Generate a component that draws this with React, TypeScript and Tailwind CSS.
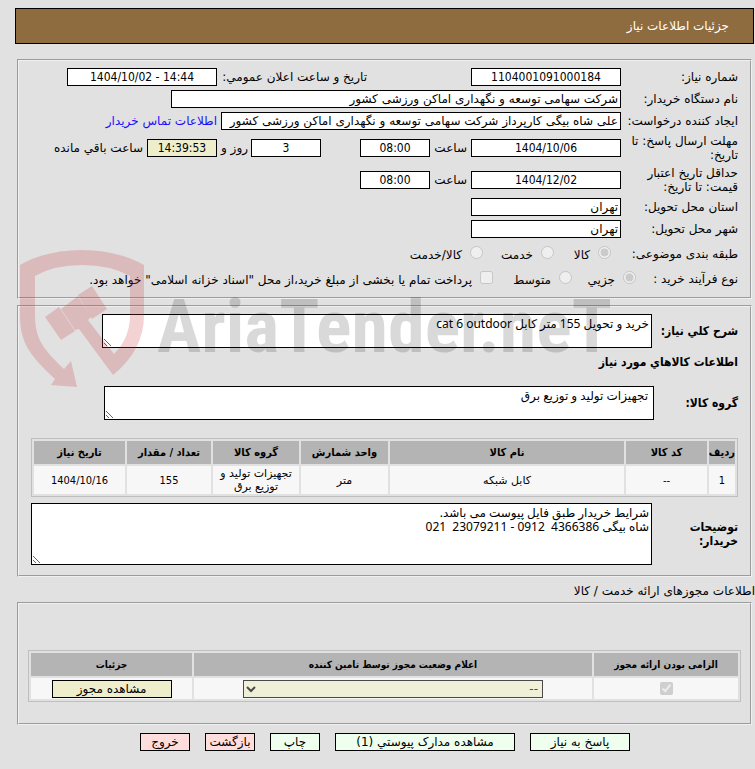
import type { ReactNode } from "react";
import { clsx } from "clsx";

const condensed = "font-['DejaVu_Sans_Condensed','DejaVu_Sans',sans-serif]";
const boldLabel = clsx(condensed, "font-bold");
const panel = "mr-[3px] ml-[2px] border-2 border-[#f0f0f0] [border-style:groove]";
const field = "h-[18px] shrink-0 border border-black px-[2px] text-xs";
const cell = "bg-[#f7f7f7] p-0 text-center";
const headCell = clsx(condensed, "h-[23px] bg-[#b4b4b4] p-0 text-center font-bold");

interface FieldProps {
  id: string;
  value: string;
  className: string;
  numeric?: boolean;
  highlighted?: boolean;
}

const Field = ({ id, value, className, numeric, highlighted }: FieldProps) => (
  <input
    id={id}
    dir={numeric ? "ltr" : "rtl"}
    value={value}
    readOnly
    className={clsx(
      field,
      numeric && [condensed, "text-center"],
      highlighted ? "bg-[#eeedcc]" : "bg-white",
      className
    )}
  />
);

interface RowProps {
  label: string;
  htmlFor?: string;
  tall?: boolean;
  children: ReactNode;
}

const Row = ({ label, htmlFor, tall, children }: RowProps) => (
  <div className={clsx("flex items-center", tall ? "h-8" : "h-[22px]")}>
    <label htmlFor={htmlFor} className="w-[117px] shrink-0 pl-[4px] leading-[14px]">
      {label}
    </label>
    {children}
  </div>
);

interface ChoiceProps {
  id: string;
  label: string;
  type: "radio" | "checkbox";
  checked?: boolean;
  className?: string;
}

const Choice = ({ id, label, type, checked = false, className }: ChoiceProps) => (
  <div className={clsx("flex shrink-0 items-start gap-2", className)}>
    <input id={id} type={type} checked={checked} readOnly disabled className="size-[13px]" />
    <label htmlFor={id} className="pt-[2px] leading-[14px] whitespace-nowrap">
      {label}
    </label>
  </div>
);

const NeedInfo = () => (
  <fieldset className={clsx(panel, "mt-[15px] px-3 pt-[5px] pb-[6px]")}>
    <Row label="شماره نیاز:" htmlFor="need-number">
      <Field id="need-number" value="1104001091000184" numeric className="w-[150px]" />
      <label htmlFor="announce-date" className="mr-[104px] w-[150px] shrink-0 whitespace-nowrap">
        تاریخ و ساعت اعلان عمومي:
      </label>
      <Field id="announce-date" value="1404/10/02 - 14:44" numeric className="w-[150px]" />
    </Row>
    <Row label="نام دستگاه خریدار:" htmlFor="buyer">
      <Field id="buyer" value="شرکت سهامی توسعه و نگهداری اماکن ورزشی کشور" className="w-[450px]" />
    </Row>
    <Row label="ایجاد کننده درخواست:" htmlFor="creator">
      <Field
        id="creator"
        value="علی شاه بیگی کارپرداز شرکت سهامی توسعه و نگهداری اماکن ورزشی کشور"
        className="w-[400px]"
      />
      <a href="#contact" className="mr-1 whitespace-nowrap text-[#1a0dff]">
        اطلاعات تماس خریدار
      </a>
    </Row>
    <Row label="مهلت ارسال پاسخ: تا تاریخ:" htmlFor="reply-date" tall>
      <Field id="reply-date" value="1404/10/06" numeric className="w-[150px]" />
      <label htmlFor="reply-time" className="w-[41px] shrink-0 pr-1">
        ساعت
      </label>
      <Field id="reply-time" value="08:00" numeric className="w-[70px]" />
      <Field id="days-left" value="3" numeric className="mr-[39px] w-[70px]" />
      <label htmlFor="days-left" className="w-[34px] shrink-0 pr-[3px] whitespace-nowrap">
        روز و
      </label>
      <Field id="time-left" value="14:39:53" numeric highlighted className="w-[70px]" />
      <label htmlFor="time-left" className="mr-1 whitespace-nowrap">
        ساعت باقي مانده
      </label>
    </Row>
    <Row label="حداقل تاریخ اعتبار قیمت: تا تاریخ:" htmlFor="valid-date" tall>
      <Field id="valid-date" value="1404/12/02" numeric className="w-[150px]" />
      <label htmlFor="valid-time" className="w-[41px] shrink-0 pr-1">
        ساعت
      </label>
      <Field id="valid-time" value="08:00" numeric className="w-[70px]" />
    </Row>
    <Row label="استان محل تحویل:" htmlFor="province">
      <Field id="province" value="تهران" className="w-[150px]" />
    </Row>
    <Row label="شهر محل تحویل:" htmlFor="city">
      <Field id="city" value="تهران" className="w-[150px]" />
    </Row>
    <div className="flex h-[27px] items-center">
      <span className="w-[127px] shrink-0">طبقه بندی موضوعی:</span>
      <Choice id="goods" label="کالا" type="radio" checked className="w-[57px]" />
      <Choice id="service" label="خدمت" type="radio" className="w-[71px]" />
      <Choice id="both" label="کالا/خدمت" type="radio" />
    </div>
    <div className="flex h-6 items-center">
      <span className="w-[102px] shrink-0">نوع فرآیند خرید :</span>
      <Choice id="minor" label="جزیي" type="radio" checked className="w-[64px]" />
      <Choice id="medium" label="متوسط" type="radio" className="w-[79px]" />
      <Choice
        id="treasury"
        label={'پرداخت تمام یا بخشی از مبلغ خرید،از محل "اسناد خزانه اسلامی" خواهد بود.'}
        type="checkbox"
      />
    </div>
  </fieldset>
);

const goodsColumns = [
  { title: "ردیف", width: "w-[26px]", value: "1", numeric: true },
  { title: "کد کالا", width: "w-[81px]", value: "--", numeric: true },
  { title: "نام کالا", width: "", value: "کابل شبکه" },
  { title: "واحد شمارش", width: "w-[87px]", value: "متر" },
  { title: "گروه کالا", width: "w-[86px]", value: "تجهیزات تولید و توزیع برق" },
  { title: "تعداد / مقدار", width: "w-[84px]", value: "155", numeric: true },
  { title: "تاریخ نیاز", width: "w-[91px]", value: "1404/10/16", numeric: true },
];

const area =
  "block border border-black bg-white p-[2px] font-['Noto_Sans','DejaVu_Sans',sans-serif] text-xs leading-[14px]";

const GoodsInfo = () => (
  <fieldset className={clsx(panel, "mt-[6px] px-3 pt-[7px] pb-[10px]")}>
    <div className="flex items-center">
      <label htmlFor="summary" className={clsx(boldLabel, "w-[86px] shrink-0")}>
        شرح كلي نياز:
      </label>
      <textarea
        id="summary"
        readOnly
        value="خرید و تحویل 155 متر کابل cat 6 outdoor"
        className={clsx(area, "h-[34px] w-[550px]")}
      />
    </div>
    <h2 className={clsx(boldLabel, "mt-[6px] h-4")}>اطلاعات كالاهاي مورد نیاز</h2>
    <div className="mt-4 flex items-center">
      <label htmlFor="goods-group" className={clsx(boldLabel, "w-[84px] shrink-0")}>
        گروه کالا:
      </label>
      <textarea
        id="goods-group"
        readOnly
        value="تجهیزات تولید و توزیع برق"
        className={clsx(area, "h-[34px] w-[550px] pr-[5px]")}
      />
    </div>
    <table className="mt-[18px] w-full table-fixed border-separate border-spacing-[2px] border border-[#bfbfbf] text-[11px] leading-[13px]">
      <thead>
        <tr>
          {goodsColumns.map((c) => (
            <th key={c.title} className={clsx(headCell, c.width)}>
              {c.title}
            </th>
          ))}
        </tr>
      </thead>
      <tbody>
        <tr>
          {goodsColumns.map((c) => (
            <td key={c.title} className={clsx(cell, "h-7", c.numeric && condensed)}>
              {c.value}
            </td>
          ))}
        </tr>
      </tbody>
    </table>
    <div className="mt-[6px] flex items-center">
      <label htmlFor="notes" className={clsx(boldLabel, "w-[86px] shrink-0 pl-5 leading-[14px]")}>
        توضیحات خریدار:
      </label>
      <textarea
        id="notes"
        readOnly
        value={"شرایط خریدار طبق فایل پیوست می باشد.\nشاه بیگی 4366386  0912 - 23079211  021"}
        className={clsx(area, "h-[62px] min-w-0 flex-1")}
      />
    </div>
  </fieldset>
);

const Permits = () => (
  <>
    <h2 className="mt-[5px] h-[18px] leading-[18px]">اطلاعات مجوزهای ارائه خدمت / کالا</h2>
    <fieldset className={clsx(panel, "mt-[2px] px-[9px] pt-[46px] pb-[21px]")}>
      <table className="w-full table-fixed border-separate border-spacing-[2px] border border-[#bfbfbf] text-[10px]">
        <thead>
          <tr>
            <th className={clsx(headCell, "w-[144px]")}>الزامی بودن ارائه مجوز</th>
            <th className={headCell}>اعلام وضعیت مجوز توسط تامین کننده</th>
            <th className={clsx(headCell, "w-[161px]")}>جزئیات</th>
          </tr>
        </thead>
        <tbody>
          <tr>
            <td className={cell}>
              <input
                type="checkbox"
                aria-label="الزامی"
                checked
                readOnly
                disabled
                className="mx-auto block size-[13px]"
              />
            </td>
            <td className={cell}>
              <select
                aria-label="وضعیت مجوز"
                disabled
                className="mx-auto block h-[18px] w-[300px] border border-black bg-[#eeedcc] text-xs text-black opacity-70"
              >
                <option>--</option>
              </select>
            </td>
            <td className={clsx(cell, "h-[21px]")}>
              <button
                type="button"
                className="mx-auto block h-[18px] w-[120px] border border-black bg-[#eeedcc] text-xs"
              >
                مشاهده مجوز
              </button>
            </td>
          </tr>
        </tbody>
      </table>
    </fieldset>
  </>
);

const actions = [
  { label: "پاسخ به نیاز", style: "w-[100px] bg-[#eeffee]" },
  { label: "مشاهده مدارک پیوستي (1)", style: "w-[180px] bg-[#eeffee]" },
  { label: "چاپ", style: "w-[50px] bg-[#eeffee]" },
  { label: "بازگشت", style: "w-[50px] bg-[#ffdddd]" },
  { label: "خروج", style: "w-[50px] bg-[#ffdddd]" },
];

const Watermark = () => (
  <svg
    className="pointer-events-none absolute top-[245px] left-[15px]"
    width="600"
    height="150"
    viewBox="15 245 600 150"
    direction="ltr"
    aria-hidden="true"
  >
    <g fill="#c8323c" fillOpacity="0.22">
      <path d="M20 265Q46 250 82 250Q117 250 144 265V315Q144 350 113 375L79 329L75 330L61 309L78 296L91 317L88 320L114 354Q130 338 130 315V276Q110 265 82 265Q54 265 35 276V314C35 338 42 348 64 369L71 361L77 387L51 385L55 379C32 357 20 345 20 315Z" />
      <path d="M45 317L59 307L75 331L61 340Z" />
      <path d="M78 295L92 286L107 309L92 319Z" />
    </g>
    <text
      x="157"
      y="352"
      fillOpacity="0.15"
      className="font-['Roboto_Condensed','Liberation_Sans_Narrow',sans-serif] text-[74px] font-bold"
    >
      AriaTender.neT
    </text>
  </svg>
);

const App = () => (
  <div
    dir="rtl"
    className="relative min-h-screen overflow-hidden bg-[#e1e1e1] pt-2 pl-[15px] font-['DejaVu_Sans',sans-serif] text-xs text-black"
  >
    <header className="mr-[1px] flex h-9 items-center border border-black bg-[#8f6c40] px-6 text-white">
      <h1>جزئیات اطلاعات نیاز</h1>
    </header>
    <main>
      <NeedInfo />
      <GoodsInfo />
      <Permits />
      <div className="mt-2 flex justify-center gap-[15px]">
        {actions.map((a) => (
          <button
            key={a.label}
            type="button"
            className={clsx("h-[18px] border border-black text-xs leading-4 whitespace-nowrap", a.style)}
          >
            {a.label}
          </button>
        ))}
      </div>
    </main>
    <Watermark />
  </div>
);

export default App;
